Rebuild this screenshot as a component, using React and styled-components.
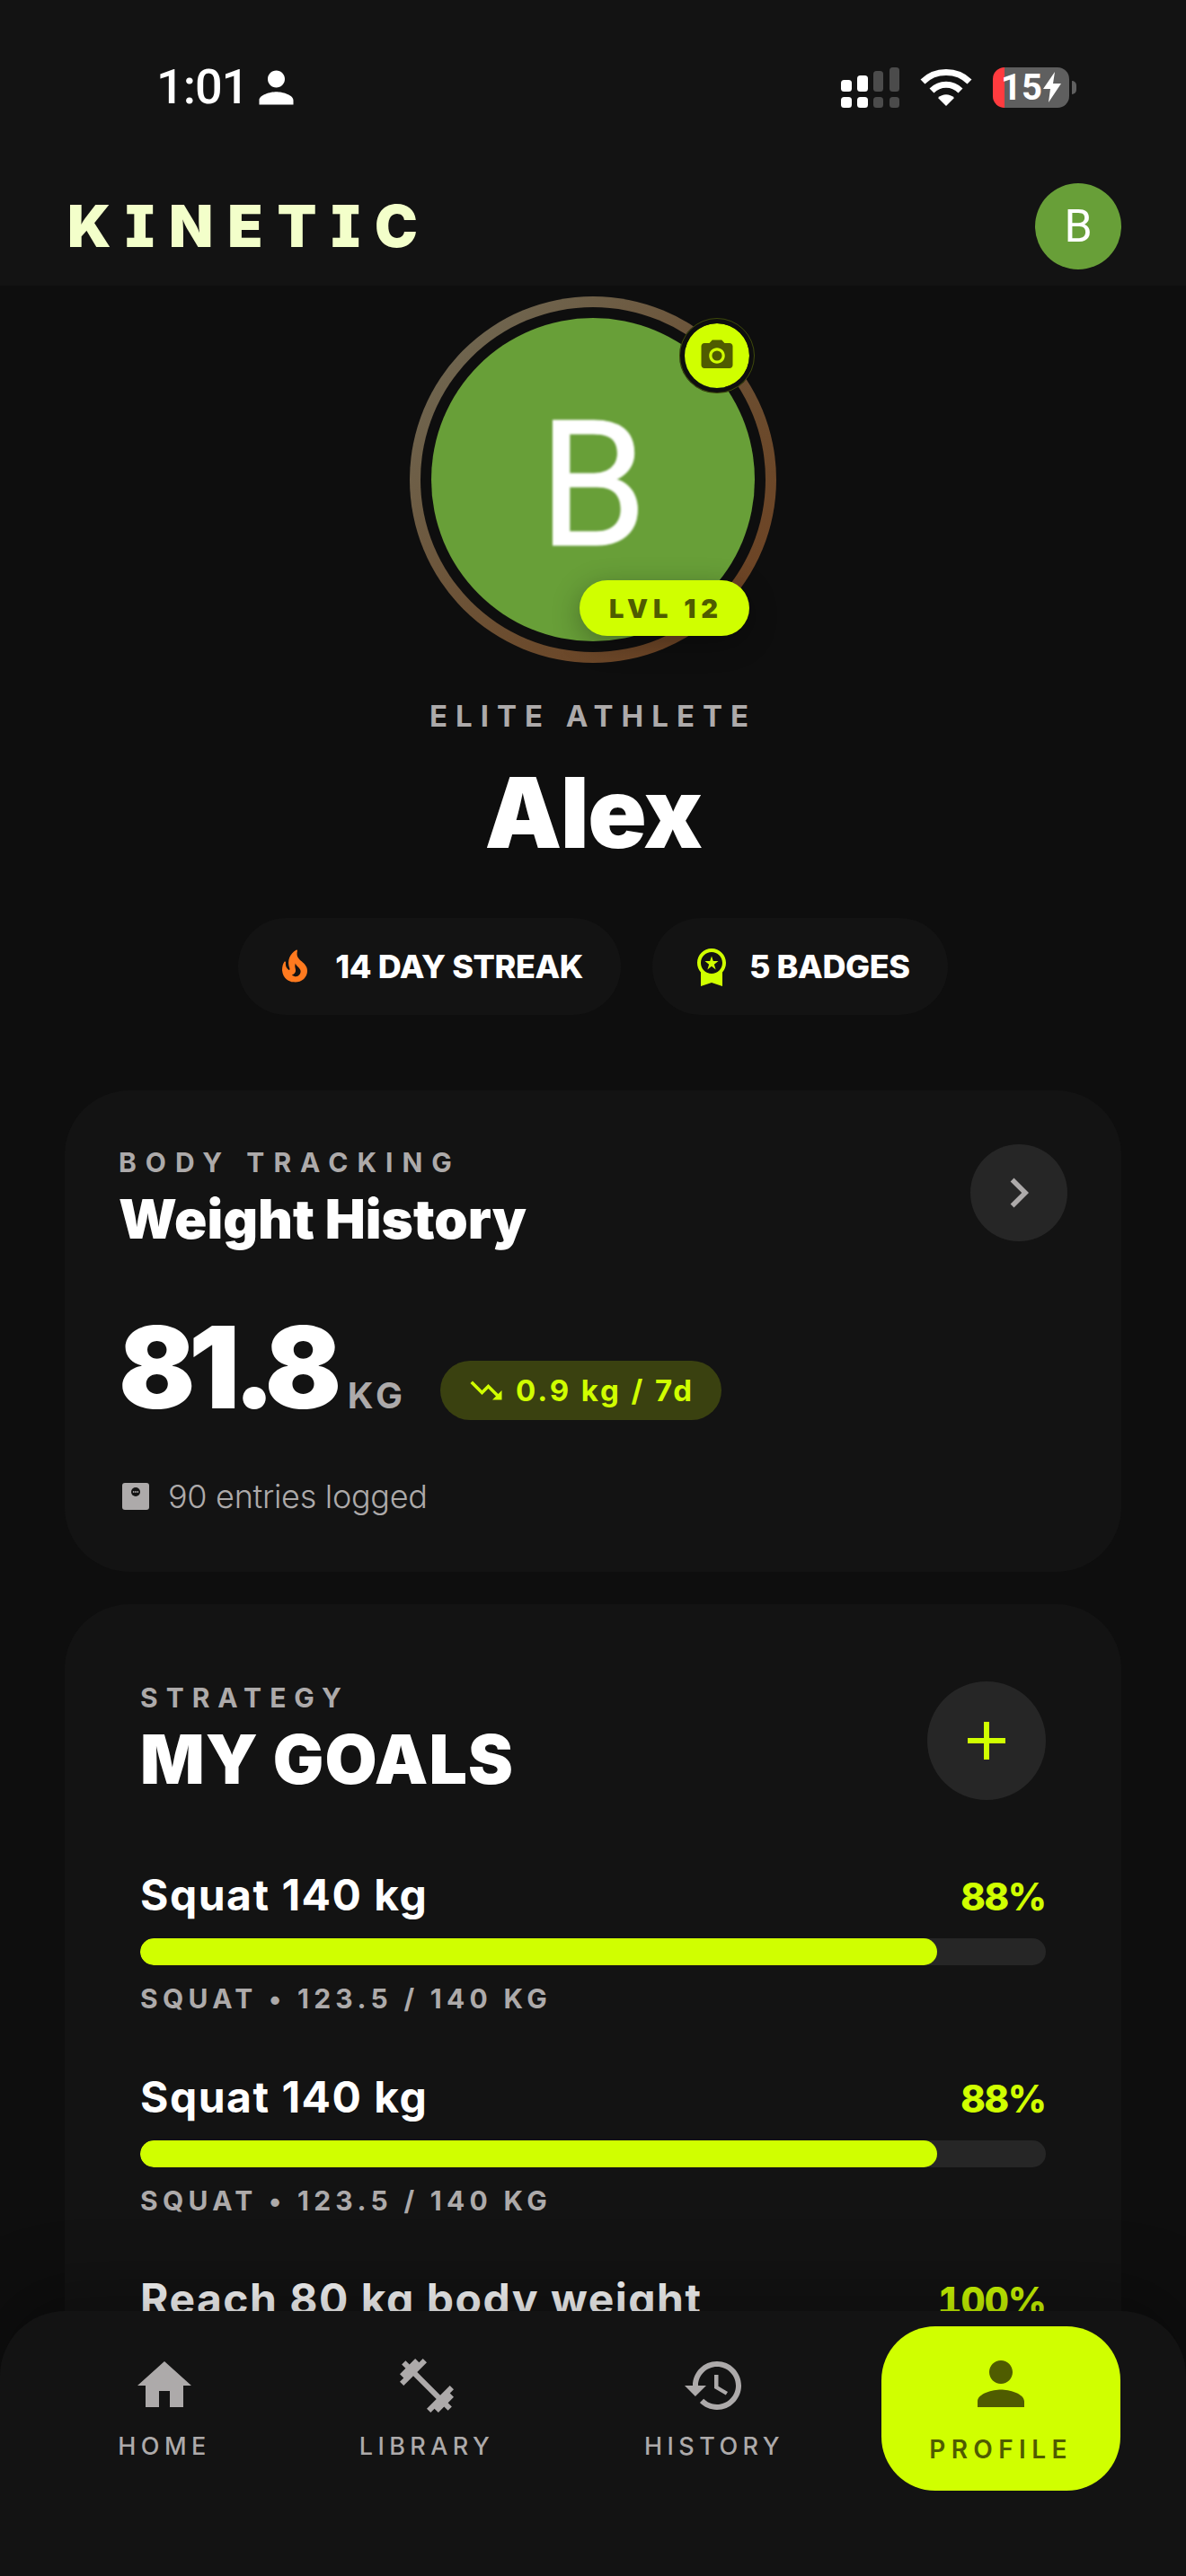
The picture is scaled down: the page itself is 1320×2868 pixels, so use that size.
import styled, { createGlobalStyle } from "styled-components";

const GlobalStyle = createGlobalStyle`
  html, body {
    margin: 0;
    padding: 0;
    background: #0e0e0e;
  }
  * {
    box-sizing: border-box;
  }
`;

const LIME = "#d0ff00";
const OLIVE = "#4f5c00";
const MUTED = "#adaaaa";

const Screen = styled.div`
  position: relative;
  width: 1320px;
  height: 2868px;
  overflow: hidden;
  background: #0e0e0e;
  color: #fff;
  font-family: Inter, "Liberation Sans", sans-serif;
`;

const Header = styled.header`
  height: 318px;
  padding-top: 70px;
  background: #131313;
`;

const StatusBar = styled.div`
  display: flex;
  align-items: center;
  justify-content: space-between;
  height: 54px;
  padding: 0 122px 0 174px;
`;

const TimeGroup = styled.div`
  display: flex;
  align-items: center;
  gap: 3px;
`;

const Time = styled.span`
  font-family: Roboto, Inter, sans-serif;
  font-size: 54px;
  line-height: 54px;
  font-weight: 500;
  letter-spacing: -1px;
`;

const StatusIcons = styled.div`
  display: flex;
  align-items: center;
  gap: 23px;
`;

const BatteryWrap = styled.div`
  display: flex;
  align-items: center;
  gap: 3px;
`;

const BatteryBody = styled.div`
  display: flex;
  align-items: center;
  justify-content: center;
  gap: 1px;
  width: 85px;
  height: 45px;
  border-radius: 13px;
  background: linear-gradient(90deg, #ff3b3f 13px, #5f5f5f 13px);
  font-family: Roboto, Inter, sans-serif;
  font-size: 40px;
  line-height: 45px;
  font-weight: 700;
`;

const BatteryNub = styled.div`
  width: 5px;
  height: 15px;
  border-radius: 0 5px 5px 0;
  background: #5f5f5f;
`;

const AppBar = styled.div`
  display: flex;
  align-items: center;
  justify-content: space-between;
  height: 96px;
  margin-top: 80px;
  padding: 0 72px 0 75px;
`;

const Logo = styled.div`
  font-size: 64px;
  line-height: 64px;
  font-weight: 900;
  letter-spacing: 16px;
  color: #f3ffca;
  font-feature-settings: "cv08" 1;
`;

const SmallAvatar = styled.div`
  display: flex;
  align-items: center;
  justify-content: center;
  width: 96px;
  height: 96px;
  border-radius: 50%;
  background: #689f38;
  font-family: Roboto, sans-serif;
  font-size: 50px;
`;

const Hero = styled.section`
  display: flex;
  flex-direction: column;
  align-items: center;
  padding-top: 12px;
`;

const RingWrap = styled.div`
  position: relative;
  width: 408px;
  height: 408px;
`;

const Ring = styled.div`
  width: 100%;
  height: 100%;
  padding: 12px;
  border-radius: 50%;
  background: linear-gradient(135deg, #706c58 0%, #6b4a2c 65%, #6e4020 100%);
`;

const RingGap = styled.div`
  width: 100%;
  height: 100%;
  padding: 12px;
  border-radius: 50%;
  background: #0e0e0e;
`;

const BigAvatar = styled.div`
  display: flex;
  align-items: center;
  justify-content: center;
  width: 100%;
  height: 100%;
  padding-top: 14px;
  border-radius: 50%;
  background: #689f38;
`;

const BigInitial = styled.span`
  font-family: Roboto, sans-serif;
  font-size: 194px;
  line-height: 194px;
  -webkit-text-stroke: 1px #fff;
  filter: blur(0.8px);
`;

const CameraBadge = styled.div`
  position: absolute;
  top: 24px;
  left: 300px;
  display: flex;
  align-items: center;
  justify-content: center;
  width: 84px;
  height: 84px;
  border-radius: 50%;
  border: 6px solid #0e0e0e;
  outline: 1px solid rgba(208, 255, 0, 0.25);
  outline-offset: -1px;
  background: ${LIME};
  background-clip: padding-box;
`;

const LevelBadge = styled.div`
  position: absolute;
  top: 316px;
  left: 189px;
  display: flex;
  align-items: center;
  justify-content: center;
  width: 189px;
  height: 62px;
  padding-left: 4px;
  border-radius: 31px;
  background: ${LIME};
  box-shadow: 0 8px 32px rgba(0, 0, 0, 0.3);
  color: ${OLIVE};
  font-size: 29px;
  font-weight: 900;
  letter-spacing: 6px;
`;

const Rank = styled.div`
  margin-top: 43px;
  font-size: 33px;
  line-height: 33px;
  font-weight: 700;
  letter-spacing: 9px;
  color: ${MUTED};
`;

const Name = styled.h1`
  margin: 37px 0 0;
  font-size: 108px;
  line-height: 108px;
  font-weight: 900;
  letter-spacing: -1.5px;
`;

const PillRow = styled.div`
  display: flex;
  gap: 35px;
  margin-top: 63px;
`;

const Pill = styled.div`
  display: flex;
  align-items: center;
  gap: ${(p) => p.$gap}px;
  height: 108px;
  padding: 0 42px;
  border-radius: 54px;
  background: #131313;
  font-size: 36px;
  font-weight: 800;
  letter-spacing: -0.4px;
`;

const Cards = styled.div`
  display: flex;
  flex-direction: column;
  gap: 36px;
  margin: 84px 72px 0;
`;

const Card = styled.section`
  background: #131313;
  border-radius: 72px;
  padding: ${(p) => p.$pad};
`;

const CardHead = styled.div`
  display: flex;
  align-items: flex-start;
  justify-content: space-between;
`;

const HeadText = styled.div`
  padding-top: ${(p) => p.$top}px;
`;

const Eyebrow = styled.div`
  font-size: 30px;
  line-height: 30px;
  font-weight: 700;
  letter-spacing: ${(p) => p.$spacing}px;
  color: ${MUTED};
`;

const CardTitle = styled.h2`
  margin: 18px 0 0;
  font-size: 60px;
  line-height: 60px;
  font-weight: 900;
  letter-spacing: 0;
`;

const GoalsTitle = styled.h2`
  margin: 18px 0 0;
  font-size: 75px;
  line-height: 72px;
  font-weight: 900;
  letter-spacing: 1px;
`;

const RoundButton = styled.div`
  display: flex;
  align-items: center;
  justify-content: center;
  flex: none;
  width: ${(p) => p.$size}px;
  height: ${(p) => p.$size}px;
  border-radius: 50%;
  background: #262626;
`;

const ValueRow = styled.div`
  display: flex;
  align-items: flex-end;
  gap: 38px;
  margin-top: 72px;
`;

const Value = styled.div`
  display: flex;
  align-items: baseline;
  gap: 14px;
`;

const Number = styled.span`
  font-size: 126px;
  line-height: 126px;
  font-weight: 900;
  letter-spacing: -7.5px;
`;

const Unit = styled.span`
  font-size: 40px;
  font-weight: 700;
  letter-spacing: 4px;
  color: ${MUTED};
`;

const Delta = styled.div`
  display: flex;
  align-items: center;
  gap: 12px;
  height: 66px;
  margin-bottom: 4px;
  padding: 0 30px;
  border-radius: 33px;
  background: #3a4110;
  color: ${LIME};
  font-size: 33px;
  font-weight: 700;
  letter-spacing: 2.9px;
`;

const Logged = styled.div`
  display: flex;
  align-items: center;
  gap: 21px;
  margin-top: 57px;
  padding-left: 4px;
  font-size: 36px;
  line-height: 48px;
  font-weight: 300;
  letter-spacing: -0.3px;
  color: ${MUTED};
`;

const GoalList = styled.div`
  display: flex;
  flex-direction: column;
  gap: 68px;
  margin-top: 79px;
`;

const GoalTop = styled.div`
  display: flex;
  align-items: baseline;
  justify-content: space-between;
`;

const GoalName = styled.div`
  font-size: 48px;
  line-height: 54px;
  font-weight: 700;
  letter-spacing: 1.5px;
`;

const GoalPercent = styled.div`
  font-size: 42px;
  line-height: 54px;
  font-weight: 800;
  font-feature-settings: "tnum" 1;
  letter-spacing: -1px;
  color: ${LIME};
`;

const Track = styled.div`
  height: 30px;
  margin-top: 19px;
  border-radius: 15px;
  background: #262626;
  overflow: hidden;
`;

const Fill = styled.div`
  height: 100%;
  border-radius: 15px;
  background: ${LIME};
`;

const GoalSub = styled.div`
  margin-top: 22px;
  font-size: 30px;
  line-height: 30px;
  font-weight: 700;
  letter-spacing: 5.3px;
  color: ${MUTED};
`;

const BottomNav = styled.nav`
  position: absolute;
  left: 0;
  right: 0;
  bottom: 0;
  display: grid;
  grid-template-columns: 264px 320px 320px 292px;
  align-items: start;
  height: 295px;
  padding: 17px 0 0 51px;
  border-radius: 72px 72px 0 0;
  background: #131313;
  box-shadow: 0 -20px 80px rgba(0, 0, 0, 0.3);
`;

const NavItem = styled.div`
  display: flex;
  flex-direction: column;
  align-items: center;
  justify-self: ${(p) => (p.$active ? "end" : "center")};
  width: ${(p) => (p.$active ? "266px" : "auto")};
  height: 183px;
  padding-top: ${(p) => (p.$active ? "25px" : "30px")};
  border-radius: 60px;
  background: ${(p) => (p.$active ? LIME : "transparent")};
  color: ${(p) => (p.$active ? OLIVE : MUTED)};
`;

const NavLabel = styled.span`
  margin-top: ${(p) => (p.$active ? "19px" : "17px")};
  font-size: ${(p) => (p.$active ? "28px" : "27px")};
  line-height: 30px;
  font-weight: ${(p) => (p.$active ? 600 : 500)};
  letter-spacing: ${(p) => (p.$active ? "6.4px" : "5.4px")};
`;

const Mat = ({ d, size = 72, color = "currentColor" }) => (
  <svg width={size} height={size} viewBox="0 0 24 24" fill={color} style={{ display: "block", flex: "none" }}>
    <path d={d} />
  </svg>
);

const PERSON = "M12 12c2.21 0 4-1.79 4-4s-1.79-4-4-4-4 1.79-4 4 1.79 4 4 4zm0 2c-2.67 0-8 1.34-8 4v2h16v-2c0-2.66-5.33-4-8-4z";
const HOME = "M10 20v-6h4v6h5v-8h3L12 3 2 12h3v8z";
const DUMBBELL = "M20.57 14.86L22 13.43 20.57 12 17 15.57 8.43 7 12 3.43 10.57 2 9.14 3.43 7.71 2 5.57 4.14 4.14 2.71 2.71 4.14l1.43 1.43L2 7.71l1.43 1.43L2 10.57 3.43 12 7 8.43 15.57 17 12 20.57 13.43 22l1.43-1.43L16.29 22l2.14-2.14 1.43 1.43 1.43-1.43-1.43-1.43L22 16.29z";
const HISTORY = "M13 3c-4.97 0-9 4.03-9 9H1l3.89 3.89.07.14L9 12H6c0-3.87 3.13-7 7-7s7 3.13 7 7-3.13 7-7 7c-1.93 0-3.68-.79-4.94-2.06l-1.42 1.42C8.27 19.99 10.51 21 13 21c4.97 0 9-4.03 9-9s-4.03-9-9-9zm-1 5v5l4.28 2.54.72-1.21-3.5-2.08V8H12z";
const CAMERA = "M12 8.8a3.2 3.2 0 1 0 0 6.4 3.2 3.2 0 0 0 0-6.4zM9 2L7.17 4H4c-1.1 0-2 .9-2 2v12c0 1.1.9 2 2 2h16c1.1 0 2-.9 2-2V6c0-1.1-.9-2-2-2h-3.17L15 2H9zm3 15c-2.76 0-5-2.24-5-5s2.24-5 5-5 5 2.24 5 5-2.24 5-5 5z";
const FLAME = "M19.48 12.35c-1.57-4.08-7.16-4.3-5.81-10.23.1-.44-.37-.78-.75-.55C9.29 3.71 6.68 8 8.87 13.62c.18.46-.36.89-.75.59-1.81-1.37-2-3.34-1.84-4.75.06-.52-.62-.77-.91-.34C4.69 10.16 4 11.84 4 14.37c.38 5.6 5.11 7.32 6.81 7.54 2.43.31 5.06-.14 6.95-1.87 2.08-1.93 2.84-5.01 1.72-7.69zm-9.28 5.03c1.44-.35 2.18-1.39 2.38-2.31.33-1.43-.96-2.83-.09-5.09.33 1.87 3.27 3.04 3.27 5.08.08 2.53-2.66 4.7-5.56 2.32z";
const MEDAL = "M9.68 13.69 12 11.93l2.31 1.76-.88-2.85L15.75 9h-2.84L12 6.19 11.09 9H8.25l2.31 1.84-.88 2.85zM20 10c0-4.42-3.58-8-8-8s-8 3.58-8 8c0 2.03.76 3.87 2 5.28V23l6-2 6 2v-7.72c1.24-1.41 2-3.25 2-5.28zm-8-6c3.31 0 6 2.69 6 6s-2.69 6-6 6-6-2.69-6-6 2.69-6 6-6z";
const TREND = "M16 18l2.29-2.29-4.88-4.88-4 4L2 7.41 3.41 6l6 6 4-4 6.3 6.29L22 12v6z";
const CHEVRON = "M10 6 8.59 7.41 13.17 12l-4.58 4.59L10 18l6-6z";

const SignalIcon = () => (
  <svg width="65" height="45" viewBox="0 0 65 45" style={{ display: "block" }}>
    <g fill="#fff">
      <rect x="0" y="14" width="12" height="13" rx="3.5" />
      <rect x="18" y="9" width="12" height="18" rx="3.5" />
      <rect x="0" y="33" width="12" height="12" rx="3.5" />
      <rect x="18" y="33" width="12" height="12" rx="3.5" />
    </g>
    <g fill="#4b4b4b">
      <rect x="36" y="4" width="11" height="23" rx="3.5" />
      <rect x="54" y="0" width="11" height="27" rx="3.5" />
      <rect x="36" y="33" width="11" height="12" rx="3.5" />
      <rect x="54" y="33" width="11" height="12" rx="3.5" />
    </g>
  </svg>
);

const WifiIcon = () => (
  <svg width="58" height="42" viewBox="0 0 58 42" style={{ display: "block" }}>
    <g fill="none" stroke="#fff" strokeWidth="7">
      <path d="M3 15 C17 1 41 1 55 15" />
      <path d="M13 25 C22 16 36 16 45 25" />
    </g>
    <path d="M20 33 C25 28 33 28 38 33 L29 42 Z" fill="#fff" />
  </svg>
);

const Bolt = () => (
  <svg width="20" height="34" viewBox="0 0 20 34" style={{ display: "block" }}>
    <path d="M13 0 L0 19 H8 L6 34 L20 13 H11 Z" fill="#fff" />
  </svg>
);

const PlusIcon = () => (
  <svg width="42" height="42" viewBox="0 0 42 42" style={{ display: "block" }}>
    <path d="M18 0h6v18h18v6H24v18h-6V24H0v-6h18z" fill={LIME} />
  </svg>
);

const ScaleIcon = () => (
  <svg width="30" height="30" viewBox="0 0 30 30" style={{ display: "block", flex: "none" }}>
    <rect width="30" height="30" rx="3" fill={MUTED} />
    <circle cx="15" cy="10" r="5" fill="#131313" />
    <circle cx="12.7" cy="10" r="0.9" fill={MUTED} />
    <circle cx="15" cy="10" r="0.9" fill={MUTED} />
    <circle cx="17.3" cy="10" r="0.9" fill={MUTED} />
  </svg>
);

const goals = [
  { name: "Squat 140 kg", percent: 88, sub: "SQUAT • 123.5 / 140 KG" },
  { name: "Squat 140 kg", percent: 88, sub: "SQUAT • 123.5 / 140 KG" },
  { name: "Reach 80 kg body weight", percent: 100 },
];

const navItems = [
  { label: "HOME", icon: HOME, size: 72 },
  { label: "LIBRARY", icon: DUMBBELL, size: 72 },
  { label: "HISTORY", icon: HISTORY, size: 72 },
  { label: "PROFILE", icon: PERSON, size: 78, active: true },
];

const App = () => {
  return (
    <Screen>
      <GlobalStyle />
      <Header>
        <StatusBar>
          <TimeGroup>
            <Time>1:01</Time>
            <Mat d={PERSON} size={57} color="#fff" />
          </TimeGroup>
          <StatusIcons>
            <SignalIcon />
            <WifiIcon />
            <BatteryWrap>
              <BatteryBody>
                15
                <Bolt />
              </BatteryBody>
              <BatteryNub />
            </BatteryWrap>
          </StatusIcons>
        </StatusBar>
        <AppBar>
          <Logo>KINETIC</Logo>
          <SmallAvatar>B</SmallAvatar>
        </AppBar>
      </Header>

      <Hero>
        <RingWrap>
          <Ring>
            <RingGap>
              <BigAvatar>
                <BigInitial>B</BigInitial>
              </BigAvatar>
            </RingGap>
          </Ring>
          <CameraBadge>
            <Mat d={CAMERA} size={42} color={OLIVE} />
          </CameraBadge>
          <LevelBadge>LVL 12</LevelBadge>
        </RingWrap>
        <Rank>ELITE ATHLETE</Rank>
        <Name>Alex</Name>
        <PillRow>
          <Pill $gap={24}>
            <Mat d={FLAME} size={42} color="#ff7a1f" />
            14 DAY STREAK
          </Pill>
          <Pill $gap={18}>
            <Mat d={MEDAL} size={48} color={LIME} />
            5 BADGES
          </Pill>
        </PillRow>
      </Hero>

      <Cards>
        <Card $pad="60px">
          <CardHead>
            <HeadText $top={5}>
              <Eyebrow $spacing={10}>BODY TRACKING</Eyebrow>
              <CardTitle>Weight History</CardTitle>
            </HeadText>
            <RoundButton $size={108}>
              <Mat d={CHEVRON} size={66} color={MUTED} />
            </RoundButton>
          </CardHead>
          <ValueRow>
            <Value>
              <Number>81.8</Number>
              <Unit>KG</Unit>
            </Value>
            <Delta>
              <Mat d={TREND} size={42} color={LIME} />
              0.9 kg / 7d
            </Delta>
          </ValueRow>
          <Logged>
            <ScaleIcon />
            90 entries logged
          </Logged>
        </Card>

        <Card $pad="86px 84px 300px">
          <CardHead>
            <HeadText $top={3}>
              <Eyebrow $spacing={9}>STRATEGY</Eyebrow>
              <GoalsTitle>MY GOALS</GoalsTitle>
            </HeadText>
            <RoundButton $size={132}>
              <PlusIcon />
            </RoundButton>
          </CardHead>
          <GoalList>
            {goals.map((goal, i) => (
              <div key={i}>
                <GoalTop>
                  <GoalName>{goal.name}</GoalName>
                  <GoalPercent>{goal.percent}%</GoalPercent>
                </GoalTop>
                {goal.sub && (
                  <>
                    <Track>
                      <Fill style={{ width: `${goal.percent}%` }} />
                    </Track>
                    <GoalSub>{goal.sub}</GoalSub>
                  </>
                )}
              </div>
            ))}
          </GoalList>
        </Card>
      </Cards>

      <BottomNav>
        {navItems.map((item) => (
          <NavItem key={item.label} $active={item.active}>
            <Mat d={item.icon} size={item.size} />
            <NavLabel $active={item.active}>{item.label}</NavLabel>
          </NavItem>
        ))}
      </BottomNav>
    </Screen>
  );
};

export default App;
